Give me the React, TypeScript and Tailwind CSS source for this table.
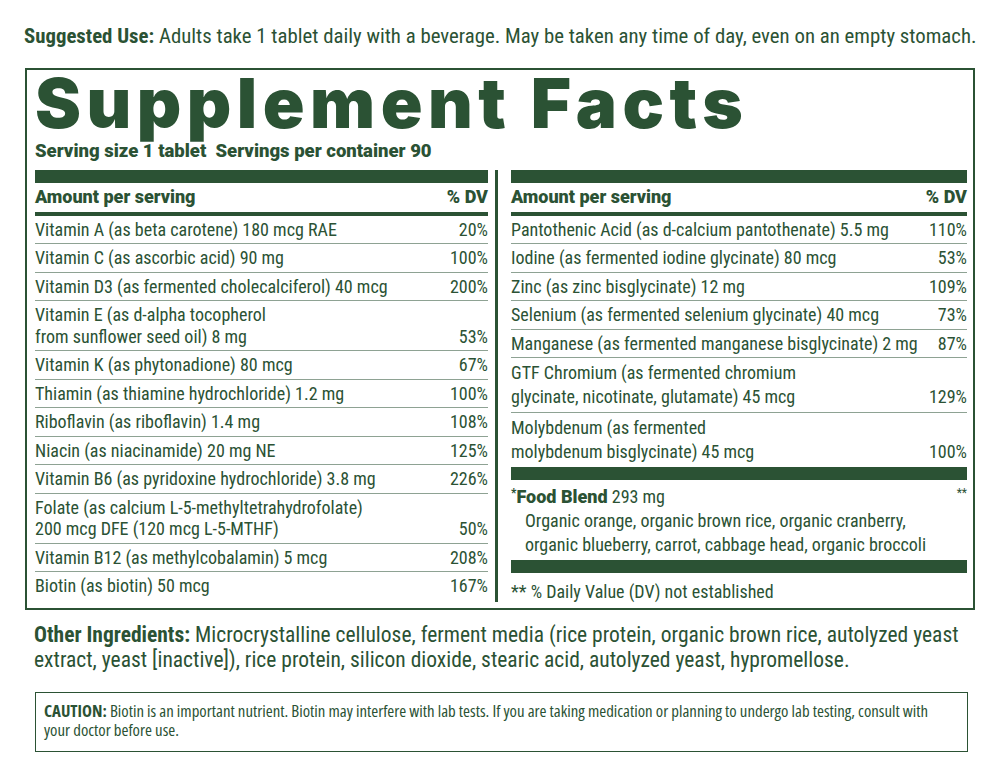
import React from 'react';

type Item = { name: React.ReactNode; dv: string; tall?: boolean };

const leftRows: Item[] = [
  { name: 'Vitamin A (as beta carotene) 180 mcg RAE', dv: '20%' },
  { name: 'Vitamin C (as ascorbic acid) 90 mg', dv: '100%' },
  { name: 'Vitamin D3 (as fermented cholecalciferol) 40 mcg', dv: '200%' },
  { name: <>Vitamin E (as d-alpha tocopherol<br />from sunflower seed oil) 8 mg</>, dv: '53%', tall: true },
  { name: 'Vitamin K (as phytonadione) 80 mcg', dv: '67%' },
  { name: 'Thiamin (as thiamine hydrochloride) 1.2 mg', dv: '100%' },
  { name: 'Riboflavin (as riboflavin) 1.4 mg', dv: '108%' },
  { name: 'Niacin (as niacinamide) 20 mg NE', dv: '125%' },
  { name: 'Vitamin B6 (as pyridoxine hydrochloride) 3.8 mg', dv: '226%' },
  { name: <>Folate (as calcium L-5-methyltetrahydrofolate)<br />200 mcg DFE (120 mcg L-5-MTHF)</>, dv: '50%', tall: true },
  { name: 'Vitamin B12 (as methylcobalamin) 5 mcg', dv: '208%' },
  { name: 'Biotin (as biotin) 50 mcg', dv: '167%' },
];

const rightRows: Item[] = [
  { name: 'Pantothenic Acid (as d-calcium pantothenate) 5.5 mg', dv: '110%' },
  { name: 'Iodine (as fermented iodine glycinate) 80 mcg', dv: '53%' },
  { name: 'Zinc (as zinc bisglycinate) 12 mg', dv: '109%' },
  { name: 'Selenium (as fermented selenium glycinate) 40 mcg', dv: '73%' },
  { name: 'Manganese (as fermented manganese bisglycinate) 2 mg', dv: '87%' },
  { name: <>GTF Chromium (as fermented chromium<br />glycinate, nicotinate, glutamate) 45 mcg</>, dv: '129%', tall: true },
  { name: <>Molybdenum (as fermented<br />molybdenum bisglycinate) 45 mcg</>, dv: '100%', tall: true },
];

function Header() {
  return (
    <>
      <div className="h-[13px] bg-[#2b5234]" />
      <div className="flex justify-between items-end h-[33px] pb-[6px] border-b-4 border-[#2b5234] font-['Roboto',sans-serif] font-black text-[18px] leading-none">
        <span>Amount per serving</span>
        <span>% DV</span>
      </div>
    </>
  );
}

function Row({ item, last, wide }: { item: Item; last?: boolean; wide?: boolean }) {
  const lh = item.tall && wide ? 'leading-[24px]' : 'leading-[21.5px]';
  return (
    <div className={`flex justify-between items-end pt-[3px] pb-[3px] ${lh} ${last ? '' : 'border-b border-[#8ea293]'}`}>
      <span>{item.name}</span>
      <span>{item.dv}</span>
    </div>
  );
}

export default function App() {
  return (
    <div className="w-[1000px] h-[774px] bg-white text-[#2b5234] font-['Roboto_Condensed','Roboto',sans-serif] overflow-hidden">
      {/* Suggested use */}
      <p className="pl-[24px] pt-[24px] text-[20.8px] leading-[24px] whitespace-nowrap">
        <span className="font-bold">Suggested Use:</span> Adults take 1 tablet daily with a beverage. May be taken any time of day, even on an empty stomach.
      </p>

      {/* Facts panel */}
      <div className="mx-[25px] mt-[20px] border-2 border-[#2b5234] pl-[8px] pr-[6px]">
        <h1 className="font-['Inter',sans-serif] font-black text-[69px] leading-none tracking-[5.5px] -mt-[1px]">
          Supplement Facts
        </h1>
        <p className="font-['Roboto',sans-serif] font-black text-[18.5px] leading-none mt-[4px] mb-[9px]">
          Serving size 1 tablet&nbsp; Servings per container 90
        </p>

        <div className="flex text-[18px]">
          <div className="w-[453px]">
            <Header />
            {leftRows.map((r, i) => (
              <Row key={i} item={r} last={i === leftRows.length - 1} />
            ))}
          </div>
          <div className="w-[3px] bg-[#2b5234] ml-[7px] mr-[13px] mb-[6px]" />
          <div className="flex-1">
            <Header />
            {rightRows.map((r, i) => (
              <Row key={i} item={r} wide last={i === rightRows.length - 1} />
            ))}
            <div className="h-[13px] bg-[#2b5234]" />
            <div className="pt-[5px] pb-[3px] leading-[24px]">
              <div className="flex justify-between">
                <span>
                  <sup className="text-[12px] font-bold">*</sup>
                  <span className="font-['Roboto',sans-serif] font-black">Food Blend</span> 293 mg
                </span>
                <span className="text-[12px] leading-[16px]">**</span>
              </div>
              <p className="pl-[14px]">
                Organic orange, organic brown rice, organic cranberry,
                <br />
                organic blueberry, carrot, cabbage head, organic broccoli
              </p>
            </div>
            <div className="h-[13px] bg-[#2b5234]" />
            <p className="pt-[8px] pb-[5px] leading-[22px]">** % Daily Value (DV) not established</p>
          </div>
        </div>
      </div>

      {/* Other ingredients */}
      <p className="px-[34px] pt-[12px] text-[21.5px] leading-[25px]">
        <span className="font-bold">Other Ingredients:</span> Microcrystalline cellulose, ferment media (rice protein, organic brown rice, autolyzed yeast extract, yeast [inactive]), rice protein, silicon dioxide, stearic acid, autolyzed yeast, hypromellose.
      </p>

      {/* Caution */}
      <div className="mx-[35px] mt-[20px] w-[933px] border border-[#2b5234] pl-[8px] pr-[20px] pt-[8px] pb-[12px] font-['Open_Sans',sans-serif] [font-stretch:75%] text-[16.8px] leading-[19px]">
        <span className="font-bold">CAUTION:</span> Biotin is an important nutrient. Biotin may interfere with lab tests. If you are taking medication or planning to undergo lab testing, consult with your doctor before use.
      </div>
    </div>
  );
}
